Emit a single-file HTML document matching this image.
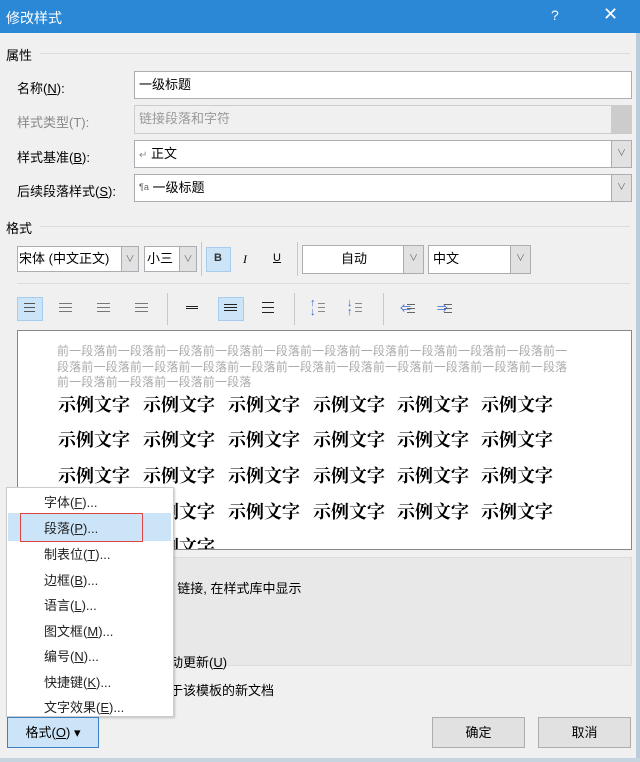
<!DOCTYPE html>
<html><head><meta charset="utf-8"><style>
*{margin:0;padding:0;box-sizing:border-box}
body{width:640px;height:762px;background:#f0f0f0;font-family:"Liberation Sans","Noto Sans CJK SC",sans-serif;font-size:13px;color:#000;position:relative;overflow:hidden}
.a{position:absolute}
.lbl{position:absolute;left:17px;font-size:13px}
.box{position:absolute;background:#fff;border:1px solid #abadb3;font-size:13px;padding-left:4px;line-height:25px}
.dd{position:absolute;right:0;top:0;bottom:0;width:20px;background:#e1e1e1;border-left:1px solid #acacac;color:#666;font-size:9px;text-align:center}
.sep{position:absolute;width:1px;background:#c8c8c8}
.hl{position:absolute;background:#cce4f7;border:1px solid #a6cdee}
.ln{position:absolute;height:2px;background:#888}
.gray{position:absolute;left:57px;font-size:12px;color:#aaa;line-height:15.5px;letter-spacing:0.15px;white-space:nowrap}
.row{position:absolute;left:0;width:640px;height:24px}
.row span{position:absolute;font-size:18px;font-weight:bold;font-family:"Noto Serif CJK SC",serif;white-space:nowrap;line-height:22px}
.mi{position:absolute;left:44px;font-size:13px;color:#222}
.btn{position:absolute;background:#e1e1e1;border:1px solid #adadad;text-align:center;line-height:29px;font-size:13px}
u{text-decoration:underline}
</style></head><body>
<div class="a" style="left:0;top:0;width:640px;height:33px;background:#2b88d6"></div>
<div class="a" style="left:6px;top:8px;color:#fff;font-size:14px">修改样式</div>
<div class="a" style="left:551px;top:7px;color:#fff;font-size:14px">?</div>
<div class="a" style="left:603px;top:4px;color:#fff;font-size:18px;font-weight:100">✕</div>
<div class="a" style="left:636px;top:33px;width:4px;height:729px;background:#bcd"></div>

<div class="a" style="left:6px;top:45px">属性</div>
<div class="a" style="left:40px;top:53px;width:590px;height:1px;background:#dcdcdc"></div>
<div class="lbl" style="top:78px">名称(<u>N</u>):</div>
<div class="box" style="left:134px;top:71px;width:498px;height:28px">一级标题</div>
<div class="lbl" style="top:112px;color:#888">样式类型(T):</div>
<div class="box" style="left:134px;top:105px;width:498px;height:29px;background:#f0f0f0;border-color:#ccc;color:#999">链接段落和字符<div class="dd" style="background:#ccc;border:0"></div></div>
<div class="lbl" style="top:147px">样式基准(<u>B</u>):</div>
<div class="box" style="left:134px;top:140px;width:498px;height:28px"><span style="color:#888;font-size:10px">↵</span> 正文<div class="dd">∨</div></div>
<div class="lbl" style="top:181px">后续段落样式(<u>S</u>):</div>
<div class="box" style="left:134px;top:174px;width:498px;height:28px"><span style="color:#666;font-size:9px;vertical-align:top">¶a</span> 一级标题<div class="dd">∨</div></div>

<div class="a" style="left:6px;top:218px">格式</div>
<div class="a" style="left:40px;top:226px;width:590px;height:1px;background:#dcdcdc"></div>

<div class="box" style="left:17px;top:246px;width:122px;height:26px;line-height:24px;padding-left:1px">宋体 (中文正文)<div class="dd" style="width:17px">∨</div></div>
<div class="box" style="left:144px;top:246px;width:53px;height:26px;line-height:24px;padding-left:2px">小三<div class="dd" style="width:17px">∨</div></div>
<div class="sep" style="left:201px;top:242px;height:34px"></div>
<div class="hl" style="left:206px;top:247px;width:25px;height:25px"></div>
<div class="a" style="left:214px;top:252px;font-size:11px;font-weight:bold;color:#333">B</div>
<div class="a" style="left:243px;top:252px;font-size:12px;font-style:italic;font-family:'Liberation Serif',serif">I</div>
<div class="a" style="left:273px;top:252px;font-size:11px;text-decoration:underline">U</div>
<div class="sep" style="left:297px;top:242px;height:34px"></div>
<div class="box" style="left:302px;top:245px;width:122px;height:29px;text-align:center;padding-right:22px">自动<div class="dd">∨</div></div>
<div class="box" style="left:428px;top:245px;width:103px;height:29px">中文<div class="dd">∨</div></div>
<div class="a" style="left:17px;top:283px;width:613px;height:1px;background:#dcdcdc"></div>

<div class="hl" style="left:17px;top:297px;width:26px;height:24px"></div>
<div class="ln" style="left:24px;top:303px;height:1px;box-shadow:0 4px 0 #555,0 8px 0 #555;background:#555;width:11px"></div>
<div class="ln" style="left:59px;top:303px;width:13px;height:1px;background:#777;box-shadow:0 4px 0 #777,0 8px 0 #777"></div>
<div class="ln" style="left:97px;top:303px;width:13px;height:1px;background:#777;box-shadow:0 4px 0 #777,0 8px 0 #777"></div>
<div class="ln" style="left:135px;top:303px;width:13px;height:1px;background:#777;box-shadow:0 4px 0 #777,0 8px 0 #777"></div>
<div class="sep" style="left:167px;top:293px;height:32px"></div>
<div class="ln" style="left:186px;top:306px;width:12px;height:1px;background:#222;box-shadow:0 2px 0 #222"></div>
<div class="hl" style="left:218px;top:297px;width:26px;height:24px"></div>
<div class="ln" style="left:224px;top:304px;width:13px;height:1px;background:#222;box-shadow:0 3px 0 #222,0 6px 0 #222"></div>
<div class="ln" style="left:262px;top:302px;width:12px;height:1px;background:#222;box-shadow:0 5px 0 #222,0 10px 0 #222"></div>
<div class="sep" style="left:294px;top:293px;height:32px"></div>
<div class="a" style="left:310px;top:299px;font-size:11px;color:#36c;line-height:9px">↑<br>↓</div><div class="ln" style="left:318px;top:303px;width:7px;height:1px;background:#888;box-shadow:0 4px 0 #888,0 8px 0 #888"></div>
<div class="a" style="left:347px;top:299px;font-size:11px;color:#36c;line-height:9px">↓<br>↑</div><div class="ln" style="left:355px;top:303px;width:7px;height:1px;background:#888;box-shadow:0 4px 0 #888,0 8px 0 #888"></div>
<div class="sep" style="left:383px;top:293px;height:32px"></div>
<div class="a" style="left:400px;top:300px;font-size:11px;color:#36c">⇐</div><div class="ln" style="left:407px;top:304px;width:8px;height:1px;background:#666;box-shadow:0 4px 0 #666,0 8px 0 #666"></div>
<div class="a" style="left:437px;top:300px;font-size:11px;color:#36c">⇒</div><div class="ln" style="left:444px;top:304px;width:8px;height:1px;background:#666;box-shadow:0 4px 0 #666,0 8px 0 #666"></div>

<div class="a" style="left:17px;top:330px;width:615px;height:220px;background:#fff;border:1px solid #888;overflow:hidden">
<div class="gray" style="left:39px;top:13px">前一段落前一段落前一段落前一段落前一段落前一段落前一段落前一段落前一段落前一段落前一<br>段落前一段落前一段落前一段落前一段落前一段落前一段落前一段落前一段落前一段落前一段落<br>前一段落前一段落前一段落前一段落</div>
<div class="row" style="left:-17px;top:62px"><span style="left:57px">示例文字</span><span style="left:142px">示例文字</span><span style="left:227px">示例文字</span><span style="left:312px">示例文字</span><span style="left:396px">示例文字</span><span style="left:480px">示例文字</span></div>
<div class="row" style="left:-17px;top:97px"><span style="left:57px">示例文字</span><span style="left:142px">示例文字</span><span style="left:227px">示例文字</span><span style="left:312px">示例文字</span><span style="left:396px">示例文字</span><span style="left:480px">示例文字</span></div>
<div class="row" style="left:-17px;top:133px"><span style="left:57px">示例文字</span><span style="left:142px">示例文字</span><span style="left:227px">示例文字</span><span style="left:312px">示例文字</span><span style="left:396px">示例文字</span><span style="left:480px">示例文字</span></div>
<div class="row" style="left:-17px;top:169px"><span style="left:57px">示例文字</span><span style="left:142px">示例文字</span><span style="left:227px">示例文字</span><span style="left:312px">示例文字</span><span style="left:396px">示例文字</span><span style="left:480px">示例文字</span></div>
<div class="row" style="left:-17px;top:204px"><span style="left:57px">示例文字</span><span style="left:142px">示例文字</span></div>
</div>

<div class="a" style="left:17px;top:557px;width:615px;height:109px;background:#e8e8e8;border:1px solid #ddd"></div>
<div class="a" style="left:170px;top:578px">: 链接, 在样式库中显示</div>
<div class="a" style="left:170px;top:652px">动更新(<u>U</u>)</div>
<div class="a" style="left:170px;top:680px">于该模板的新文档</div>

<div class="a" style="left:6px;top:487px;width:168px;height:230px;background:#fff;border:1px solid #ccc;box-shadow:1px 1px 2px rgba(0,0,0,.2)"></div>
<div class="a" style="left:8px;top:513px;width:163px;height:28px;background:#cce4f7"></div>
<div class="a" style="left:20px;top:513px;width:123px;height:29px;border:1px solid #d44"></div>
<div class="mi" style="top:492px">字体(<u>F</u>)...</div>
<div class="mi" style="top:518px">段落(<u>P</u>)...</div>
<div class="mi" style="top:544px">制表位(<u>T</u>)...</div>
<div class="mi" style="top:570px">边框(<u>B</u>)...</div>
<div class="mi" style="top:595px">语言(<u>L</u>)...</div>
<div class="mi" style="top:621px">图文框(<u>M</u>)...</div>
<div class="mi" style="top:646px">编号(<u>N</u>)...</div>
<div class="mi" style="top:672px">快捷键(<u>K</u>)...</div>
<div class="mi" style="top:697px">文字效果(<u>E</u>)...</div>

<div class="btn" style="left:7px;top:717px;width:92px;height:31px;background:#cce4f7;border-color:#3d7fc1">格式(<u>O</u>) ▾</div>
<div class="btn" style="left:432px;top:717px;width:93px;height:31px">确定</div>
<div class="btn" style="left:538px;top:717px;width:93px;height:31px">取消</div>
<div class="a" style="left:0;top:758px;width:640px;height:4px;background:#c6d4e0"></div>
</body></html>
